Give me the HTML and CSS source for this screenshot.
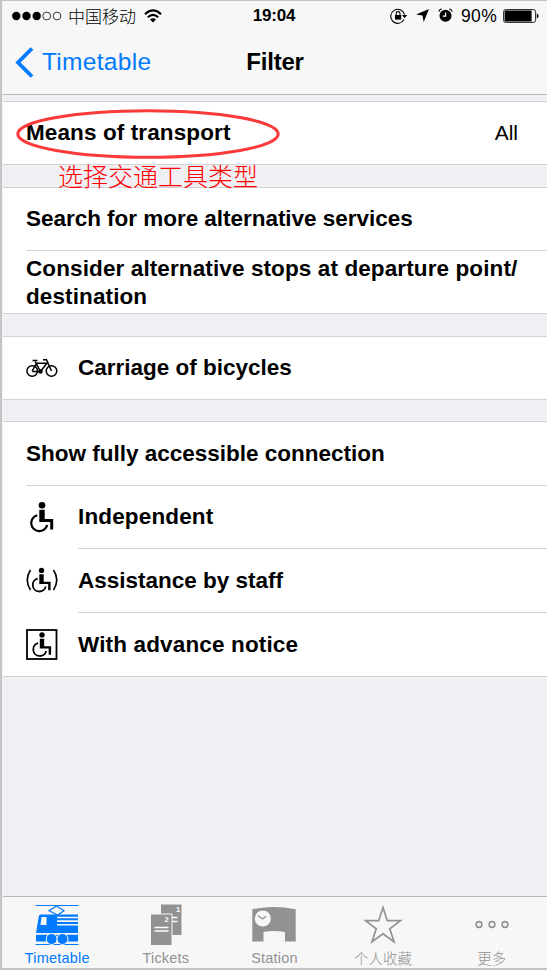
FILE: index.html
```html
<!DOCTYPE html>
<html lang="en">
<head>
    <meta charset="UTF-8">
    <meta name="viewport" content="width=device-width, initial-scale=1.0">
    <title>Filter</title>
    <link rel="stylesheet" href="styles.css">
</head>
<body>
    <!-- Shared wheelchair symbol -->
    <svg class="defs" width="0" height="0">
        <symbol id="wheelchair" viewBox="0 0 24 32">
            <circle cx="12" cy="4.200" r="3.300" fill="#000"/>
            <path d="M9.300 8.800h5.400v9.200h8.500v10.500h-3v-7.500H9.300z" fill="#000"/>
            <path d="M7.300 14.200A8.100 8.100 0 1 0 17.200 24" fill="none" stroke="#000" stroke-width="2.200"/>
        </symbol>
    </svg>

    <div class="screen">
        <header class="header">
            <div class="status">
                <div class="carrier">
                    <svg width="50" height="12" viewBox="0 0 50 12">
                        <g fill="#000"><circle cx="4.300" cy="6" r="4.200"/><circle cx="14.500" cy="6" r="4.200"/><circle cx="24.700" cy="6" r="4.200"/></g>
                        <g fill="none" stroke="#222" stroke-width=".9"><circle cx="34.700" cy="6" r="3.900"/><circle cx="45" cy="6" r="3.900"/></g>
                    </svg>
                    <span class="operator">中国移动</span>
                    <svg width="18" height="14" viewBox="0 0 18 14">
                        <g fill="none" stroke="#000" stroke-width="2.200"><path d="M1 5.200Q9-2.300 17 5.200"/><path d="M3.800 8.300Q9 3.500 14.200 8.300"/></g>
                        <path d="M6 10.400Q9 7.900 12 10.400L9 13.500z"/>
                    </svg>
                </div>
                <span class="time">19:04</span>
                <div class="indicators">
                    <svg class="lock" width="18" height="16" viewBox="0 0 18 16">
                        <path d="M14 11.500A7 7 0 1 1 14.500 6.500" fill="none" stroke="#000" stroke-width="1.100"/>
                        <path d="M12 7h5.200L14.600 10.200z"/>
                        <path d="M5 7h6.200v4.600H5z"/>
                        <path d="M6.200 7.500V5.500a1.900 1.900 0 0 1 3.800 0v2" fill="none" stroke="#000" stroke-width="1.100"/>
                    </svg>
                    <svg class="arrow" width="13" height="13" viewBox="0 0 13 13"><path d="M13 0L7.700 13 6.500 6.500 0 5.600z"/></svg>
                    <svg class="alarm" width="15" height="15" viewBox="0 0 15 15">
                        <circle cx="7.500" cy="7.800" r="6"/>
                        <path d="M.7 3.500Q1.500 1.500 3.600.8M11.400.8Q13.500 1.500 14.300 3.500" fill="none" stroke="#000" stroke-width="1.200"/>
                        <path d="M7.600 4.500v3.700H4.800" fill="none" stroke="#fff" stroke-width="1.200"/>
                    </svg>
                    <span class="percent">90%</span>
                    <svg class="battery" width="36" height="14" viewBox="0 0 36 14">
                        <rect x=".6" y=".6" width="32" height="12.800" rx="2" fill="none" stroke="#222"/>
                        <rect x="1.600" y="1.600" width="27" height="10.800" rx=".5"/>
                        <path d="M33.800 4.500q1.800.6 1.800 2.500t-1.800 2.500z"/>
                    </svg>
                </div>
            </div>
            <div class="navbar">
                <a class="back">
                    <svg width="19" height="31" viewBox="0 0 19 31"><path d="M17 1.500L3 15.500l14 14" fill="none" stroke="#007aff" stroke-width="3.800"/></svg>
                    <span>Timetable</span>
                </a>
                <h1 class="title">Filter</h1>
            </div>
        </header>

        <main class="content">
            <section class="group annotated">
                <div class="row">
                    <span class="label means">Means of transport</span>
                    <span class="value">All</span>
                </div>
                <!-- Red annotation over the first row -->
                <svg class="mark" width="266" height="52" viewBox="0 0 266 52"><ellipse cx="133" cy="26" rx="130.200" ry="23.200" fill="none" stroke="#fb3a3a" stroke-width="3"/></svg>
                <span class="note">选择交通工具类型</span>
            </section>

            <section class="group">
                <div class="row"><span class="label search">Search for more alternative services</span></div>
                <div class="row stops-row"><span class="label stops">Consider alternative stops at departure point/<br>destination</span></div>
            </section>

            <section class="group">
                <div class="row">
                    <span class="icon">
                        <svg width="32" height="20" viewBox="0 0 32 20" fill="none" stroke="#000" stroke-width="1.500">
                            <circle cx="6.200" cy="13" r="5.300"/><circle cx="25.500" cy="13" r="5.300"/>
                            <path d="M6.200 13l4.200-7.700h10.500l-6.400 8.200H6.200M9.200 3.700l5.300 9.800M6.500 2.500h5M25.500 13L20.500 1.700H17"/>
                            <circle cx="14.500" cy="13.500" r="1.500"/>
                        </svg>
                    </span>
                    <span class="label bicycles">Carriage of bicycles</span>
                </div>
            </section>

            <section class="group last">
                <div class="row"><span class="label accessible">Show fully accessible connection</span></div>
                <div class="row">
                    <span class="icon"><svg width="24" height="32"><use href="#wheelchair"/></svg></span>
                    <span class="label independent">Independent</span>
                </div>
                <div class="row indent">
                    <span class="icon">
                        <svg width="32" height="27" viewBox="0 0 32 27">
                            <use href="#wheelchair" x="5.500" y="0" width="20" height="26"/>
                            <path d="M4.500 3Q-2 13 4.500 23M27.500 3Q34 13 27.500 23" fill="none" stroke="#000" stroke-width="1.600"/>
                        </svg>
                    </span>
                    <span class="label assistance">Assistance by staff</span>
                </div>
                <div class="row indent">
                    <span class="icon">
                        <svg width="32" height="31" viewBox="0 0 32 31">
                            <rect x="1" y="1" width="29.500" height="29" fill="none" stroke="#000" stroke-width="1.800"/>
                            <use href="#wheelchair" x="6" y="2.500" width="20" height="26"/>
                        </svg>
                    </span>
                    <span class="label notice">With advance notice</span>
                </div>
            </section>
        </main>

        <nav class="tabbar">
            <a class="tab active">
                <svg width="44" height="42" viewBox="0 0 44 42" fill="#007aff">
                    <path d="M.5 1.500h43M.5 40.500h43" stroke="#007aff"/>
                    <path d="M21.500 2L29 6.800 22.500 11 14 6.800z" fill="none" stroke="#007aff" stroke-width="1.200"/>
                    <path d="M5.500 10.500H43V29H1L3.800 12.500Q4.200 10.500 5.500 10.500z"/>
                    <path d="M1 30.800h42v6.700H1z"/>
                    <path d="M6.500 13h5v8h-6z M22 12.700h21v1.600H22zM22 16.300h21v1.600H22zM22 19.900h21v1.600H22z" fill="#f7f7f7"/>
                    <circle cx="16.700" cy="35" r="5.500" stroke="#f7f7f7" stroke-width="1"/><circle cx="27.500" cy="35" r="5.500" stroke="#f7f7f7" stroke-width="1"/>
                </svg>
                <span class="tab-label">Timetable</span>
            </a>
            <a class="tab">
                <svg width="32" height="42" viewBox="0 0 32 42">
                    <path d="M11 .5h20.500v30.500H11z" fill="#929292"/>
                    <path d="M19 13.500h8.500M19 17.500h8.500" stroke="#fff" stroke-width="1.300"/>
                    <path d="M.5 10h21.500v31.500H.5z" fill="#929292" stroke="#f7f7f7"/>
                    <path d="M4.500 23.500h14M4.500 27h14" stroke="#fff" stroke-width="1.300"/>
                    <text class="ticket-number" x="26" y="7.500">1</text><text class="ticket-number" x="14.500" y="18">2</text>
                </svg>
                <span class="tab-label">Tickets</span>
            </a>
            <a class="tab">
                <svg width="44" height="42" viewBox="0 0 44 42">
                    <path d="M.3 5.300Q22 .7 43.700 5.300V37.500H33V28Q22 26 11.500 28v9.500H.3z" fill="#929292"/>
                    <circle cx="10.800" cy="14.500" r="8" fill="#f7f7f7"/>
                    <path d="M6 11.500l4.500 3.500 3.700-2.800" fill="none" stroke="#929292" stroke-width="1.300"/>
                </svg>
                <span class="tab-label">Station</span>
            </a>
            <a class="tab">
                <svg width="40" height="42" viewBox="0 0 40 42"><path d="M20 3.500l4.300 13.200h13.200L26.800 24.800l4.200 13-11-8-11 8 4.200-13L2.500 16.700h13.200z" fill="none" stroke="#929292" stroke-width="1.700"/></svg>
                <span class="tab-label cjk">个人收藏</span>
            </a>
            <a class="tab">
                <svg width="36" height="42" viewBox="0 0 36 42" fill="none" stroke="#929292" stroke-width="1.600"><circle cx="5" cy="20.500" r="2.900"/><circle cx="18" cy="20.500" r="2.900"/><circle cx="31" cy="20.500" r="2.900"/></svg>
                <span class="tab-label cjk">更多</span>
            </a>
        </nav>
    </div>
</body>
</html>
```
FILE: styles.css
```css
* {
    box-sizing: border-box;
}

body {
    margin: 0;
    height: 970px;
    padding: 1px 0 2px 2px;
    overflow: hidden;
    background: #c4c4c5;
    font-family: "Liberation Sans", "Noto Sans CJK SC", sans-serif;
    color: #000;
}

.defs {
    position: absolute;
}

svg {
    display: block;
    flex: none;
}

.screen {
    display: flex;
    flex-direction: column;
    height: 967px;
    border-left: 1px solid #f2f2f2;
    background: #efeff4;
}

/* Header */
.header {
    height: 94px;
    background: #f7f7f7;
    border-bottom: 1px solid #b9b9bd;
}

.status {
    display: grid;
    grid-template-columns: 1fr auto 1fr;
    align-items: center;
    height: 29px;
    padding: 0 8px 0 9px;
}

.carrier,
.indicators {
    display: flex;
    align-items: center;
}

.operator {
    margin: 0 8px 0 6px;
    font: 300 17px/28px "Noto Sans CJK SC", sans-serif;
}

.time {
    margin-left: -3px;
    padding-top: 1px;
    font-size: 17px;
    font-weight: bold;
    letter-spacing: -0.2px;
}

.indicators {
    justify-content: flex-end;
}

.arrow {
    margin-left: 8px;
}

.alarm {
    margin-left: 9px;
}

.percent {
    margin: 0 6px 0 8px;
    font-size: 17.5px;
    line-height: 20px;
    letter-spacing: 0.3px;
}

.navbar {
    display: grid;
    grid-template-columns: 1fr auto 1fr;
    align-items: center;
    height: 64px;
    padding: 0 12px;
}

.back {
    display: flex;
    align-items: center;
    gap: 8px;
    color: #007aff;
    font-size: 24.5px;
    letter-spacing: 0.3px;
}

.title {
    margin: 0;
    font-size: 24px;
    letter-spacing: -0.2px;
}

/* Option list */
.content {
    flex: 1;
    display: flex;
    flex-direction: column;
    gap: 22px;
    padding-top: 6px;
}

.group {
    padding-left: 23px;
    background: #fff;
    border-top: 1px solid #d2d2d5;
    border-bottom: 1px solid #d2d2d5;
}

.group.annotated {
    position: relative;
    z-index: 1;
}

.group.last {
    margin-top: -1px;
}

.row {
    display: flex;
    align-items: center;
    height: 62px;
}

.group.last .row:first-child {
    height: 63px;
}

.row + .row {
    height: 64px;
    border-top: 1px solid #d4d4d6;
}

.group.last .row:nth-child(2) {
    height: 63px;
}

.row + .row.stops-row {
    height: 63px;
    padding-top: 2px;
}

.row + .row.indent {
    border-top: 0;
    padding-top: 1px;
    background: linear-gradient(#d4d4d6, #d4d4d6) 52px 0 / 100% 1px no-repeat;
}

.icon {
    display: flex;
    align-items: center;
    justify-content: center;
    width: 32px;
    margin-right: 20px;
}

.label {
    font-size: 22.5px;
    font-weight: bold;
    line-height: 28px;
    white-space: nowrap;
}

.label.means,
.label.stops {
    letter-spacing: 0.11px;
}

.label.independent,
.label.notice {
    letter-spacing: 0.15px;
}

.label.search {
    letter-spacing: -0.03px;
}

.value {
    margin-left: auto;
    padding-right: 29px;
    font-size: 21px;
}

.mark {
    position: absolute;
    top: 6px;
    left: 12px;
}

.note {
    position: absolute;
    top: 58px;
    left: 55px;
    color: #f00;
    font: 300 25px/30px "Noto Sans CJK SC", sans-serif;
    white-space: nowrap;
}

/* Bottom tabs */
.tabbar {
    display: grid;
    grid-template-columns: repeat(5, 1fr);
    height: 72px;
    padding-right: 1px;
    background: #f7f7f7;
    border-top: 1px solid #b7b7bb;
}

.tab {
    display: flex;
    flex-direction: column;
    align-items: center;
    padding-top: 7px;
    color: #929292;
}

.tab.active {
    color: #007aff;
}

.tab-label {
    margin-top: 4px;
    font-size: 14.5px;
    line-height: 17px;
    letter-spacing: 0.2px;
}

.tab-label.cjk {
    margin-top: 3px;
    font-family: "Noto Sans CJK SC", sans-serif;
    font-weight: 300;
    letter-spacing: 0;
}

.ticket-number {
    fill: #fff;
    font-size: 7.5px;
    font-weight: bold;
}
```
